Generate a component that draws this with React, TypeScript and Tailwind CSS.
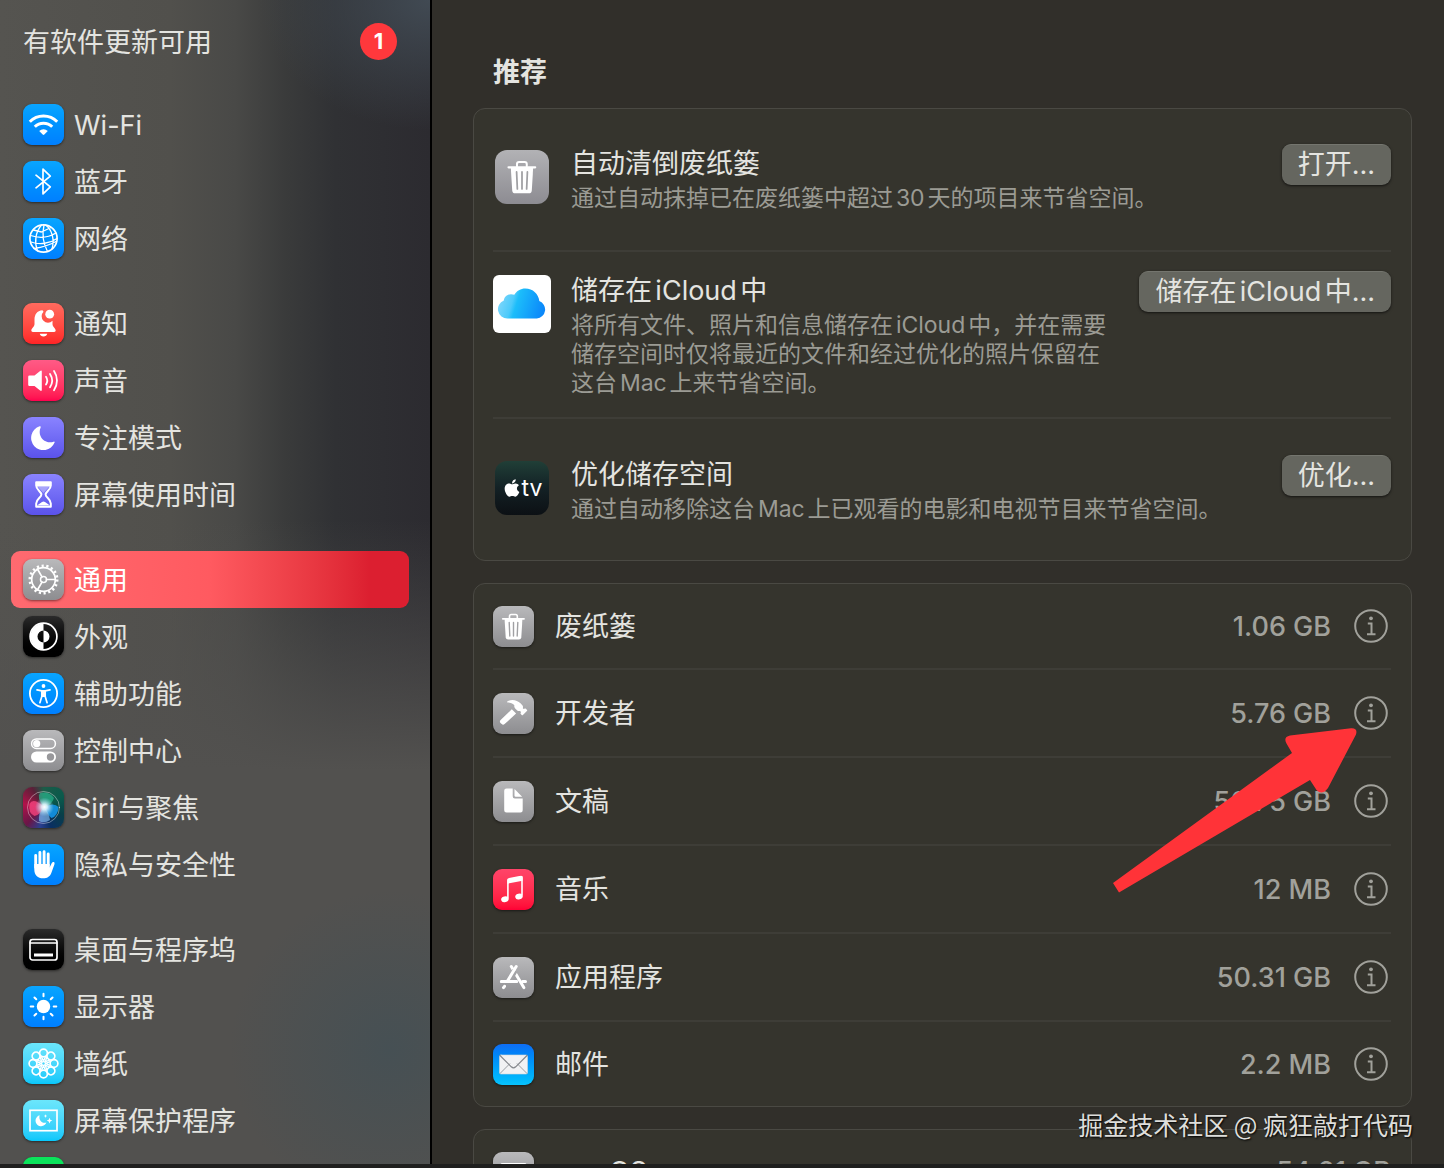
import React from 'react';
import { clsx } from 'clsx';
import { FaApple } from 'react-icons/fa';

type IconProps = { children: React.ReactNode; className: string };

const Tile: React.FC<IconProps> = ({ children, className }) => (
  <span
    className={clsx(
      'block size-[41px] shrink-0 overflow-hidden rounded-[9px] shadow-sm shadow-black/40',
      className
    )}
  >
    <svg
      viewBox="0 0 41 41"
      className="size-full"
      fill="none"
      stroke="white"
      strokeLinecap="round"
      strokeLinejoin="round"
      aria-hidden="true"
    >
      {children}
    </svg>
  </span>
);

const BLUE = 'bg-linear-to-b from-[#0aa5ff] to-[#007fff]';
const GRAY = 'bg-linear-to-b from-[#b9b9bb] to-[#8d8d90]';
const BLACK = 'bg-linear-to-b from-[#2b2b2b] to-[#000000]';
const INDIGO = 'bg-linear-to-b from-[#8a83ff] to-[#5b52ea]';
const CYAN = 'bg-linear-to-b from-[#6be6fb] to-[#05c8fb]';

const angles8 = [0, 45, 90, 135, 180, 225, 270, 315];

const TrashGlyph = () => (
  <>
    <path d="M16.5 12V10.2q0-1.7 1.7-1.7h4.4q1.7 0 1.7 1.7V12" strokeWidth="1.6" />
    <path d="M9.8 12.8h21.2" strokeWidth="1.8" />
    <path
      d="M11.6 13h17.8l-1.1 18.2q-.2 2.3-2.4 2.3H15.1q-2.2 0-2.4-2.3z"
      fill="white"
      stroke="none"
    />
    <path d="M16.2 16.5l.6 13.5M20.5 16.5v13.5M24.8 16.5l-.6 13.5" stroke="#a0a0a3" strokeWidth="1.4" />
  </>
);

const icons = {
  wifi: (
    <Tile className={BLUE}>
      <g strokeLinecap="butt" strokeWidth="3">
        <path d="M6.8 17.7a19.3 19.3 0 0 1 27.4 0" />
        <path d="M11.8 22.8a12.3 12.3 0 0 1 17.4 0" />
      </g>
      <path d="M16.2 26.9a6.2 6.2 0 0 1 8.6 0l-3.5 3.6q-.8.8-1.6 0z" fill="white" stroke="none" />
    </Tile>
  ),
  bluetooth: (
    <Tile className={BLUE}>
      <path d="M13 14.2l14.3 11.6-7.3 7V8.2l7.3 7L13 26.8" strokeWidth="1.7" />
    </Tile>
  ),
  network: (
    <Tile className={BLUE}>
      <circle cx="20.5" cy="20.5" r="13.6" strokeWidth="1.7" />
      <path
        d="M18.5 7c-6 7-7.500 17-4 26M21 7c-2 9-1 18 3.500 26.500M22.500 7c6 4 9.500 14 6.500 24M7.500 17.500c9 3 18 2 25.500-2.500M8 24c9 3 19 1.500 26-3.500M11 30.500c7-1 15-3 22-7M10.500 12l8 2 9.500-4.500"
        strokeWidth="1.3"
      />
    </Tile>
  ),
  bell: (
    <Tile className="bg-linear-to-b from-[#ff6a5e] to-[#ff2326]">
      <path
        d="M19.500 7.200c-5.500.4-8 4.500-8 9.300v4.500c0 2.800-3.200 4.300-3.200 6.600q0 1.400 1.500 1.400h21.400q1.500 0 1.500-1.400c0-2.300-3.200-3.800-3.200-6.600v-3.200a6.100 6.100 0 0 1-9-9z"
        fill="white"
        stroke="none"
      />
      <path d="M16.800 30.700h7.400a3.800 3.500 0 0 1-7.400 0z" fill="white" stroke="none" />
      <circle cx="26.700" cy="11.200" r="4.400" fill="white" stroke="none" />
    </Tile>
  ),
  sound: (
    <Tile className="bg-linear-to-b from-[#ff5a86] to-[#ff004e]">
      <path
        d="M6.500 15.500h5l5.600-4.600q1.700-1.200 1.700.7v18.200q0 1.900-1.700.7L11.500 26h-5q-1.300 0-1.300-1.300v-7.900q0-1.300 1.300-1.300z"
        fill="white"
        stroke="none"
      />
      <path d="M23 16.800a7 7 0 0 1 0 7.700M27 14a12 12 0 0 1 0 13.200M31 11a17 17 0 0 1 0 19.200" strokeWidth="1.800" />
    </Tile>
  ),
  moon: (
    <Tile className={INDIGO}>
      <path
        d="M16.600 9.300a12.200 12.200 0 1 0 15 16.300c.3-.8-.3-1.200-1-.9C22.500 27.500 13.600 19.500 17.700 10.200c.3-.7-.3-1.200-1.100-.9z"
        fill="white"
        stroke="none"
      />
    </Tile>
  ),
  hourglass: (
    <Tile className={INDIGO}>
      <path
        d="M13.200 8.300h14.600v3.200c0 4.500-5.200 6-5.200 9s5.200 4.500 5.200 9v3.200H13.200v-3.200c0-4.500 5.200-6 5.200-9s-5.200-4.500-5.200-9z"
        strokeWidth="2"
      />
      <path d="M13 8h15v4.500H13zM14 31.500l5-3.500q1.500-1 3 0l5 3.500z" fill="white" stroke="none" />
      <path d="M14.500 12.500h12L20.500 19z" fill="white" stroke="none" opacity=".35" />
    </Tile>
  ),
  gear: (
    <Tile className={GRAY}>
      <circle cx="20.500" cy="20.500" r="11.800" strokeWidth="1.700" />
      <circle cx="20.500" cy="20.500" r="13.700" strokeWidth="2.600" strokeDasharray="2.200 2.583" strokeLinecap="butt" />
      <circle cx="20.500" cy="20.500" r="3" strokeWidth="1.500" />
      <path d="M23.500 20.500h8.800M19 17.900l-4.600-7.900M19 23.100L14.400 31" strokeWidth="1.700" />
    </Tile>
  ),
  appearance: (
    <Tile className={BLACK}>
      <circle cx="20.500" cy="20.500" r="13.400" strokeWidth="1.700" />
      <path d="M20.500 7.500a13 13 0 0 0 0 26v-7a6 6 0 0 1 0-12zM20.500 14.500a6 6 0 0 1 0 12z" fill="white" stroke="none" />
    </Tile>
  ),
  accessibility: (
    <Tile className={BLUE}>
      <circle cx="20.500" cy="20.500" r="13.600" strokeWidth="1.800" />
      <circle cx="20.500" cy="13" r="1.900" fill="white" stroke="none" />
      <path d="M14 16.800l4.800 1h3.400l4.800-1" strokeWidth="1.700" />
      <path d="M18.800 17.800v5.700l-1.900 6.200M22.200 17.800v5.700l1.900 6.200" strokeWidth="1.700" />
      <path d="M18.500 17.500h4v6.500h-4z" fill="white" stroke="none" />
    </Tile>
  ),
  control: (
    <Tile className={GRAY}>
      <rect x="8.600" y="8.900" width="23.800" height="9.600" rx="4.800" strokeWidth="1.500" />
      <circle cx="13.700" cy="13.700" r="3.600" fill="white" stroke="none" />
      <rect x="8" y="21.500" width="25" height="11" rx="5.500" fill="white" stroke="none" />
      <circle cx="27.500" cy="27" r="3.700" fill="#98989b" stroke="none" />
    </Tile>
  ),
  siri: (
    <Tile className="bg-[conic-gradient(from_0deg,#1c5c48,#0a5a4c_60deg,#083f48_110deg,#0a2f63_160deg,#2b3f8f_190deg,#6a1647_225deg,#b3124a_280deg,#5a2038_330deg,#1c5c48)]">
      <defs>
        <radialGradient id="siri-core" cx=".5" cy=".5" r=".5">
          <stop offset="0" stopColor="#fff" />
          <stop offset=".3" stopColor="#e2f6ff" stopOpacity=".9" />
          <stop offset="1" stopColor="#8fd0ee" stopOpacity="0" />
        </radialGradient>
      </defs>
      <path d="M21 20Q10 10 6.500 17q-1.500 9 5 12 6-1 9.500-9z" fill="#f5447e" stroke="none" opacity=".8" />
      <path d="M21 20q10-5 14.500 0-.5 9-7 11-5-4-7.500-11z" fill="#1499f0" stroke="none" opacity=".85" />
      <path d="M21 20Q13 10 17 6q9-2 14 5-2 7-10 9z" fill="#2cc499" stroke="none" opacity=".6" />
      <path d="M21 20q-6 6-5 14 5 3 11-1-1-8-6-13z" fill="#7db4e6" stroke="none" opacity=".7" />
      <circle cx="21.500" cy="20" r="9.500" fill="url(#siri-core)" stroke="none" />
      <circle cx="20.500" cy="20.500" r="16" strokeWidth="1" opacity=".4" />
    </Tile>
  ),
  hand: (
    <Tile className={BLUE}>
      <path d="M12.700 11.500v12M16.900 8.500v13M21.100 7.800v13M25.200 10v12" strokeWidth="2.900" />
      <path
        d="M11.300 20h15.300v3.500l2.200-4.600q1-1.500 2.200-.8 1 .7.400 2.300l-3 8.300c-1.600 4.200-4.300 5.600-8.200 5.600-5.500 0-8.900-3.400-8.900-8.800z"
        fill="white"
        stroke="none"
      />
    </Tile>
  ),
  dock: (
    <Tile className={BLACK}>
      <rect x="7" y="10.500" width="27" height="20.500" rx="2.500" strokeWidth="1.700" />
      <path d="M7 14h27" strokeWidth="1.300" />
      <path d="M12.500 26h16" strokeWidth="3" strokeLinecap="square" />
    </Tile>
  ),
  display: (
    <Tile className={BLUE}>
      <circle cx="20.500" cy="20.500" r="6.700" fill="white" stroke="none" />
      {angles8.map(a => (
        <path key={a} d="M20.500 10.300v-2.600" strokeWidth="2" transform={`rotate(${a} 20.500 20.500)`} />
      ))}
    </Tile>
  ),
  wallpaper: (
    <Tile className={CYAN}>
      {angles8.map(a => (
        <g key={a} transform={`rotate(${a} 20.500 20.500)`}>
          <circle cx="20.500" cy="10" r="3.900" strokeWidth="1.700" />
          <path d="M18.300 13.300l2.200 5 2.200-5" strokeWidth="1.400" />
        </g>
      ))}
      <circle cx="20.500" cy="20.500" r="1.900" strokeWidth="1.200" />
    </Tile>
  ),
  screensaver: (
    <Tile className={CYAN}>
      <rect x="7" y="10.300" width="27" height="20.400" strokeWidth="1.700" strokeLinejoin="miter" />
      <path d="M16.600 15.200a5.600 5.600 0 1 0 6.800 7.300c-4.600 1.300-8-2.600-6.800-7.300z" fill="white" stroke="none" />
      <path
        d="M26.500 17.800l.8 2 2 .8-2 .8-.8 2-.8-2-2-.8 2-.8zM22.500 14.300l.5 1.300 1.300.5-1.300.5-.5 1.300-.5-1.300-1.300-.5 1.300-.5z"
        fill="white"
        stroke="none"
      />
    </Tile>
  ),
  battery: (
    <Tile className="bg-[#0be35b]">
      <rect x="8" y="14" width="23" height="13" rx="3" strokeWidth="2" />
    </Tile>
  ),
  trash: (
    <Tile className={GRAY}>
      <TrashGlyph />
    </Tile>
  ),
  hammer: (
    <Tile className={GRAY}>
      <path
        d="M14.500 8.300c4.500-2.600 9.600-1.300 13 2l1.800 1.900c.9.900.8 2 .5 3l.9.900 1.200-.5c.5-.2.800 0 1.100.3l.9.900c.4.400.4.800 0 1.200l-4 4c-.4.400-.8.400-1.200 0l-.9-.9c-.3-.3-.4-.7-.2-1.100l.4-1.100-1-1c-1.200.4-2.100.2-3-.7l-1.800-1.800c-1-1-1.100-2.100-.8-3.200-1.800-1.800-4-2.600-6.600-2.700-.7 0-.8-.900-.3-1.200z"
        fill="white"
        stroke="none"
      />
      <path d="M18.800 16.300l4.300 4.300-11.500 10.500c-1 .9-2 .9-2.900 0l-1.200-1.200c-.9-.9-.8-1.900.1-2.900z" fill="white" stroke="none" />
    </Tile>
  ),
  document: (
    <Tile className={GRAY}>
      <path
        d="M13.500 7.500h6.200v7.800q0 2.200 2.200 2.200h7.800v11.700q0 2.300-2.300 2.300H13.500q-2.300 0-2.300-2.300V9.800q0-2.300 2.300-2.300z"
        fill="white"
        stroke="none"
      />
      <path d="M21.500 8l7.700 7.800h-6.500q-1.200 0-1.200-1.200z" fill="white" stroke="none" />
    </Tile>
  ),
  music: (
    <Tile className="bg-linear-to-b from-[#ff4469] to-[#ff0035]">
      <path d="M14.900 29V11.500q0-1.300 1.300-1.600l11.500-2.300q1.300-.4 1.300 1.300V26" strokeWidth="1.600" />
      <path d="M14.500 10.200l15-3v4.500l-15 3z" fill="white" stroke="none" />
      <ellipse cx="11.900" cy="30.300" rx="3.800" ry="2.900" fill="white" stroke="none" transform="rotate(-15 11.900 30.300)" />
      <ellipse cx="26" cy="27.500" rx="3.800" ry="2.900" fill="white" stroke="none" transform="rotate(-15 26 27.500)" />
    </Tile>
  ),
  apps: (
    <Tile className={GRAY}>
      <path d="M11.500 29.300l-1 1.300M18.300 9.500l12.500 21.100" strokeWidth="3" />
      <path d="M8.500 24.500h15M29.500 24.500h3" strokeWidth="3" />
      <path d="M22 13.500l-6.500 11" strokeWidth="5.500" stroke="#a4a4a7" strokeLinecap="butt" />
      <path d="M8.500 24.500h15" strokeWidth="3" />
      <path d="M23.200 9.500L14.500 24" strokeWidth="3" />
    </Tile>
  ),
  mail: (
    <Tile className="bg-linear-to-b from-[#0f6df5] to-[#09c3fd]">
      <rect x="6.500" y="11" width="28" height="19" rx="1.500" fill="#f1f2f4" stroke="#d3d6da" strokeWidth=".6" />
      <path d="M7 29.500l9.700-9.700M34 29.500l-9.700-9.700" stroke="#9b9ea3" strokeWidth="1" />
      <path d="M7 11.500l11.300 11.300q2.200 2 4.400 0L34 11.500" stroke="#85888d" strokeWidth="1.200" />
    </Tile>
  ),
  macos: (
    <Tile className={GRAY}>
      <rect x="8" y="12" width="25" height="17" rx="2" strokeWidth="2" />
      <path d="M9 13h23" strokeWidth="3" />
    </Tile>
  ),
};

type IconName = keyof typeof icons;
type NavItem = { icon: IconName; label?: string };

const navGroups: NavItem[][] = [
  [
    { icon: 'wifi', label: 'Wi-Fi' },
    { icon: 'bluetooth', label: '蓝牙' },
    { icon: 'network', label: '网络' },
  ],
  [
    { icon: 'bell', label: '通知' },
    { icon: 'sound', label: '声音' },
    { icon: 'moon', label: '专注模式' },
    { icon: 'hourglass', label: '屏幕使用时间' },
  ],
  [
    { icon: 'gear', label: '通用' },
    { icon: 'appearance', label: '外观' },
    { icon: 'accessibility', label: '辅助功能' },
    { icon: 'control', label: '控制中心' },
    { icon: 'siri', label: 'Siri与聚焦' },
    { icon: 'hand', label: '隐私与安全性' },
  ],
  [
    { icon: 'dock', label: '桌面与程序坞' },
    { icon: 'display', label: '显示器' },
    { icon: 'wallpaper', label: '墙纸' },
    { icon: 'screensaver', label: '屏幕保护程序' },
    { icon: 'battery' },
  ],
];

const storage: { icon: IconName; label: string; size: string }[] = [
  { icon: 'trash', label: '废纸篓', size: '1.06 GB' },
  { icon: 'hammer', label: '开发者', size: '5.76 GB' },
  { icon: 'document', label: '文稿', size: '56.75 GB' },
  { icon: 'music', label: '音乐', size: '12 MB' },
  { icon: 'apps', label: '应用程序', size: '50.31 GB' },
  { icon: 'mail', label: '邮件', size: '2.2 MB' },
];

const Sidebar = () => (
  <nav className="w-[432px] shrink-0 overflow-hidden border-r-2 border-black bg-[radial-gradient(ellipse_170px_130px_at_430px_0px,#414a53,transparent),radial-gradient(ellipse_160px_160px_at_390px_1050px,#465054,transparent),linear-gradient(to_bottom,transparent_520px,#52514f_770px),linear-gradient(to_right,#555450,#51504c_170px,#494947_235px,#3a3b3b_285px,#303134_335px,#2c2b30)] px-[11px] pt-[13px]">
    <a href="#update" className="mb-[27px] flex h-14 items-center justify-between pr-[22px] pl-3">
      <span className="pt-1">有软件更新可用</span>
      <span className="flex size-[37px] items-center justify-center rounded-full bg-[#ff383c] text-[22px] font-bold text-white">
        1
      </span>
    </a>
    <div className="flex flex-col gap-7">
      {navGroups.map((group, i) => (
        <ul key={i}>
          {group.map(item => (
            <li key={item.icon}>
              <a
                href={`#${item.icon}`}
                className={clsx(
                  'mr-[10px] flex h-[57px] items-center gap-[10px] rounded-[9px] pl-3',
                  item.icon === 'gear' &&
                    'bg-linear-to-r from-[#ff6a70] via-[#ff5a60] via-50% to-[#dc1f30] to-90% text-white'
                )}
              >
                {icons[item.icon]}
                {item.label && <span className="pt-1">{item.label}</span>}
              </a>
            </li>
          ))}
        </ul>
      ))}
    </div>
  </nav>
);

interface RecommendationProps {
  icon: React.ReactNode;
  title: string;
  action: string;
  className: string;
  children: React.ReactNode;
}

const Recommendation: React.FC<RecommendationProps> = ({ icon, title, action, className, children }) => (
  <li className={clsx('flex items-start border-[#3e3d37]', className)}>
    <div className="mr-5 flex w-[58px] shrink-0 justify-center">{icon}</div>
    <div className="flex-1">
      <h3 className="leading-10">{title}</h3>
      <p className="text-[23px] leading-[29px] text-[#9b9b94]">{children}</p>
    </div>
    <button
      type="button"
      className="h-[41px] shrink-0 rounded-[9px] border-t border-[#74756e] bg-[#65665f] px-4 leading-[38px] shadow-sm shadow-black/50"
    >
      {action}
    </button>
  </li>
);

const card = 'rounded-xl border border-[#4a4943] bg-[#35342d] pr-5 pl-[19px]';

const InfoButton = ({ label }: { label: string }) => (
  <button type="button" aria-label={label} className="mr-[3px] ml-[23px]">
    <svg viewBox="0 0 34 34" className="size-[34px]" fill="none" stroke="#a1a19b" strokeWidth="2">
      <circle cx="17" cy="17" r="15.800" />
      <circle cx="17" cy="9.300" r="1.900" fill="#a1a19b" stroke="none" />
      <path d="M13.800 14.500h3.700v10.700M13 25.300h8.500" />
    </svg>
  </button>
);

export default function App() {
  return (
    <div className="flex h-screen flex-col overflow-hidden bg-[#1f1f1e] font-[Inter,'Noto_Sans_CJK_SC',sans-serif] text-[27px] text-[#e4e4e0] [text-autospace:normal]">
      <div className="flex min-h-0 flex-1">
        <Sidebar />
        <main className="relative min-w-0 flex-1 overflow-hidden bg-[#312f2a] pr-8 pl-[41px]">
          <h2 className="pt-[53px] pb-[15px] pl-5 leading-10 font-bold">推荐</h2>

          <ul className={clsx(card, 'mb-[22px]')}>
            <Recommendation
              className="border-b-2 pt-[35px] pb-[37px]"
              title="自动清倒废纸篓"
              action="打开..."
              icon={
                <span className="mt-[6px] block size-[54px] rounded-xl bg-linear-to-b from-[#b2b2b5] to-[#8d8c92]">
                  <svg viewBox="-1 -1 43 43" className="size-full" fill="none" stroke="white" strokeLinecap="round">
                    <TrashGlyph />
                  </svg>
                </span>
              }
            >
              通过自动抹掉已在废纸篓中超过30天的项目来节省空间。
            </Recommendation>
            <Recommendation
              className="border-b-2 py-[19px]"
              title="储存在iCloud中"
              action="储存在iCloud中..."
              icon={
                <span className="mt-1 block size-[58px] rounded-md bg-white">
                  <svg viewBox="0 0 58 58" className="size-full">
                    <defs>
                      <linearGradient id="cloud" x1="0" y1=".3" x2="1" y2=".5">
                        <stop offset="0" stopColor="#83d8fb" />
                        <stop offset=".32" stopColor="#4ccafb" />
                        <stop offset=".42" stopColor="#1cbdfa" />
                        <stop offset="1" stopColor="#0b88fa" />
                      </linearGradient>
                    </defs>
                    <path
                      d="M14.500 43.500A9.400 9.400 0 0 1 10.800 25.400C11.500 20.500 16.500 17.800 21.300 19.800 23.500 15.800 27.800 13.500 32.300 13.500c7.500 0 13.400 5.500 14 12.600A9 9 0 0 1 43.800 43.500z"
                      fill="url(#cloud)"
                    />
                  </svg>
                </span>
              }
            >
              将所有文件、照片和信息储存在iCloud中，并在需要
              <br />
              储存空间时仅将最近的文件和经过优化的照片保留在
              <br />
              这台Mac上来节省空间。
            </Recommendation>
            <Recommendation
              className="py-9"
              title="优化储存空间"
              action="优化..."
              icon={
                <span className="mt-[6px] flex size-[54px] items-center justify-center rounded-xl bg-linear-to-b from-[#203f37] via-[#132125] to-[#0c1014] text-[23px] leading-none text-white">
                  <FaApple className="size-5" />
                  tv
                </span>
              }
            >
              通过自动移除这台Mac上已观看的电影和电视节目来节省空间。
            </Recommendation>
          </ul>

          <div className={clsx(card, 'relative mb-[22px]')}>
            <ul>
              {storage.map(item => (
                <li
                  key={item.icon}
                  className="flex h-[88px] items-center border-b-2 border-[#3e3d37] first:h-[86px] last:h-[84px] last:border-b-0"
                >
                  {icons[item.icon]}
                  <span className="ml-[21px] flex-1 pt-[3px]">{item.label}</span>
                  <span className="pt-[2px] font-medium text-[#a1a19b]">{item.size}</span>
                  <InfoButton label={item.label} />
                </li>
              ))}
            </ul>
            {/* Pointer towards the developer row's info button */}
            <svg
              viewBox="0 0 250 170"
              className="pointer-events-none absolute top-[141px] right-[51px] h-[170px] w-[250px]"
              fill="#ff3338"
              aria-hidden="true"
            >
              <path d="M3 158L182 28l-5.500-9.500Q173 12 180 10.500L241 3.200q7-.5 5 6.300L218 63q-6 8-11.500 2L200 55 9 167.500z" />
            </svg>
          </div>

          <div className={clsx(card, 'flex h-[86px] items-center')}>
            {icons.macos}
            <span className="ml-[21px] flex-1">macOS</span>
            <span className="font-medium text-[#a1a19b]">54.21 GB</span>
          </div>

          <p className="absolute right-[31px] bottom-[22px] font-['Noto_Sans_CJK_SC',sans-serif] text-[25px] leading-9 text-[#dededb] [text-shadow:1px_1px_2px_#000]">
            掘金技术社区 @ 疯狂敲打代码
          </p>
        </main>
      </div>
      <div className="h-1 shrink-0" />
    </div>
  );
}
